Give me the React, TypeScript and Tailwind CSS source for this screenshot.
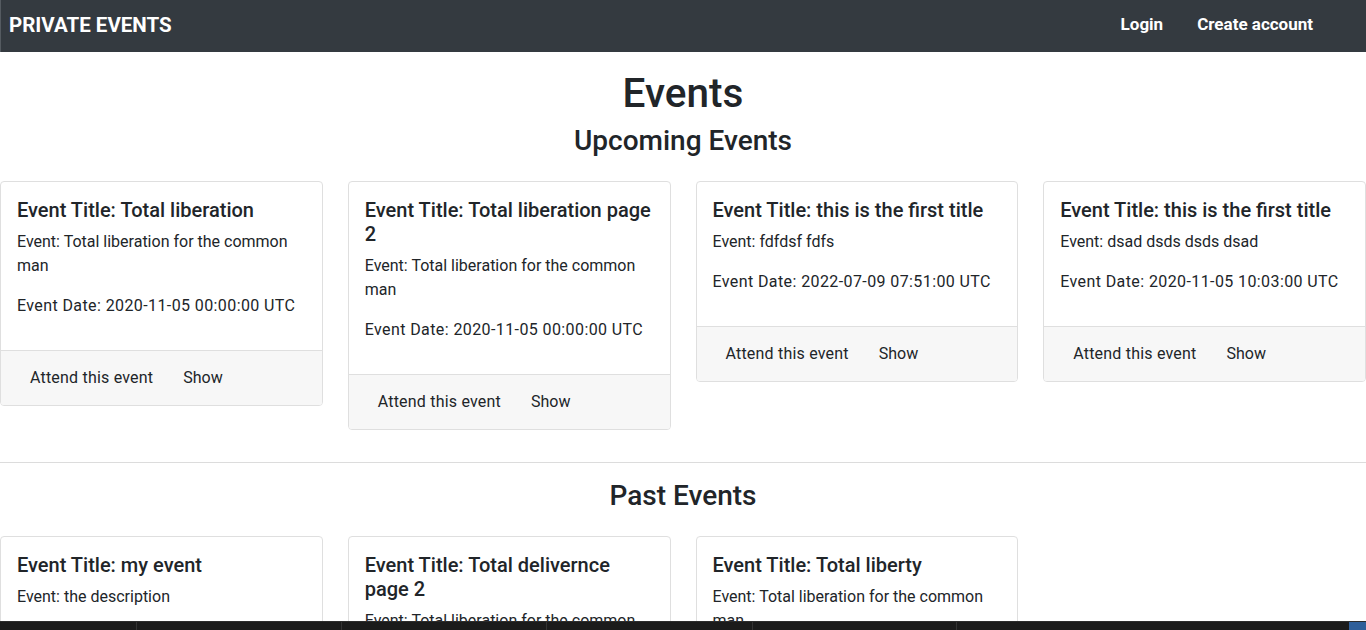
import React from "react";

type Ev = { title: string; desc: string; date?: string };

const upcoming: Ev[] = [
  { title: "Total liberation", desc: "Total liberation for the common man", date: "2020-11-05 00:00:00 UTC" },
  { title: "Total liberation page 2", desc: "Total liberation for the common man", date: "2020-11-05 00:00:00 UTC" },
  { title: "this is the first title", desc: "fdfdsf fdfs", date: "2022-07-09 07:51:00 UTC" },
  { title: "this is the first title", desc: "dsad dsds dsds dsad", date: "2020-11-05 10:03:00 UTC" },
];

const past: Ev[] = [
  { title: "my event", desc: "the description", date: "2020-11-01 00:00:00 UTC" },
  { title: "Total delivernce page 2", desc: "Total liberation for the common man", date: "2020-11-01 00:00:00 UTC" },
  { title: "Total liberty", desc: "Total liberation for the common man", date: "2020-11-01 00:00:00 UTC" },
];

function Card({ ev }: { ev: Ev }) {
  return (
    <div className="border border-[#dfdfdf] rounded-[4px] bg-white overflow-hidden">
      <div className="p-4">
        <h5 className="text-[20px] leading-[24px] font-medium mb-2">Event Title: {ev.title}</h5>
        <p className="text-[16px] leading-[24px] mb-4">Event: {ev.desc}</p>
        <p className="text-[16px] leading-[24px] mb-4 tracking-[0.4px] whitespace-nowrap">Event Date: {ev.date}</p>
      </div>
      <div className="border-t border-[#dfdfdf] bg-[#f7f7f7] px-[17px] py-2 flex items-center h-[55px]">
        <span className="px-3 py-[7px] text-[16px] leading-[24px] tracking-[0.2px]">Attend this event</span>
        <span className="px-3 py-[7px] ml-[6px] text-[16px] leading-[24px]">Show</span>
      </div>
    </div>
  );
}

export default function App() {
  return (
    <div className="min-h-screen bg-white text-[#212529]" style={{ fontFamily: "Roboto, 'Noto Sans', sans-serif" }}>
      <nav className="h-[52px] bg-[#343a40] flex items-center justify-between border-l border-[#555b61] pb-[2px]">
        <span className="ml-[8px] text-white font-bold text-[20.5px]">PRIVATE EVENTS</span>
        <div className="flex items-center mr-[53px] text-white font-bold text-[17px]">
          <span>Login</span>
          <span className="ml-[34px]">Create account</span>
        </div>
      </nav>
      <h1 className="text-center text-[40.5px] leading-[48px] font-medium mt-[17px] mb-[7px]">Events</h1>
      <h3 className="text-center text-[28px] leading-[34px] font-medium mb-[23px]">Upcoming Events</h3>
      <div className="grid grid-cols-4 gap-[25px] items-start">
        {upcoming.map((e, i) => (
          <Card key={i} ev={e} />
        ))}
      </div>
      <hr className="mt-[32px] border-t border-[#dcdcdc]" />
      <h3 className="text-center text-[28px] leading-[34px] font-medium mt-[16px] mb-[23px]">Past Events</h3>
      <div className="grid grid-cols-4 gap-[25px] items-start pb-10">
        {past.map((e, i) => (
          <Card key={i} ev={e} />
        ))}
      </div>
      <div className="fixed left-0 right-0 bottom-0 h-[9px] bg-[#1b1b1b] border-t border-[#2c2c2c] flex">
        <div className="w-[137px] border-r border-[#333]" />
        <div className="w-[205px] border-r border-[#333]" />
        <div className="w-[205px] border-r border-[#333]" />
        <div className="w-[206px] border-r border-[#333]" />
        <div className="w-[204px] border-r border-[#333]" />
        <div className="flex-1" />
        <div className="w-[17px] bg-[#2f5f9a]" />
      </div>
    </div>
  );
}
